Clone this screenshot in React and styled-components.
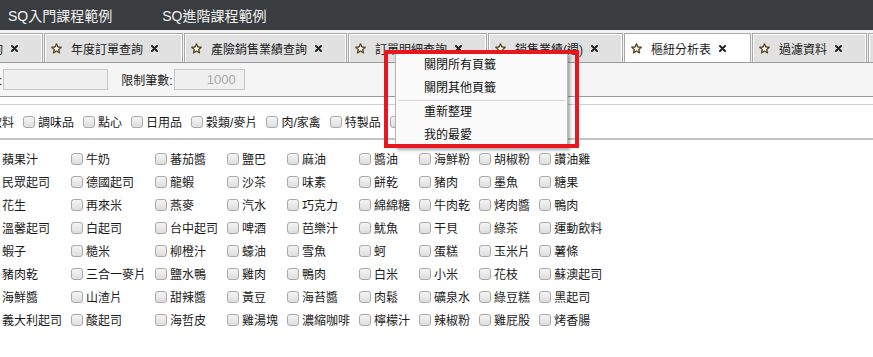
import React from 'react';
import styled, { createGlobalStyle } from 'styled-components';

const GlobalStyle = createGlobalStyle`
  body {
    margin: 0;
    background: #fff;
    overflow: hidden;
    font-family: "Liberation Sans", "Noto Sans CJK TC", sans-serif;
    font-size: 12px;
    color: #222;
  }
`;

const menus = ['SQ入門課程範例', 'SQ進階課程範例'];

const tabs = [
  { label: '銷售明細查詢' },
  { label: '年度訂單查詢' },
  { label: '產險銷售業績查詢' },
  { label: '訂單明細查詢' },
  { label: '銷售業績(週)' },
  { label: '樞紐分析表', active: true },
  { label: '過濾資料' },
  { label: '客戶資料' }
];

const categories = ['飲料', '調味品', '點心', '日用品', '穀類/麥片', '肉/家禽', '特製品', '海鮮'];

const products = [
  ['蘋果汁', '牛奶', '蕃茄醬', '鹽巴', '麻油', '醬油', '海鮮粉', '胡椒粉', '讚油雞'],
  ['民眾起司', '德國起司', '龍蝦', '沙茶', '味素', '餅乾', '豬肉', '墨魚', '糖果'],
  ['花生', '再來米', '燕麥', '汽水', '巧克力', '綿綿糖', '牛肉乾', '烤肉醬', '鴨肉'],
  ['溫馨起司', '白起司', '台中起司', '啤酒', '芭樂汁', '魷魚', '干貝', '綠茶', '運動飲料'],
  ['蝦子', '糙米', '柳橙汁', '蠔油', '雪魚', '蚵', '蛋糕', '玉米片', '薯條'],
  ['豬肉乾', '三合一麥片', '鹽水鴨', '雞肉', '鴨肉', '白米', '小米', '花枝', '蘇澳起司'],
  ['海鮮醬', '山渣片', '甜辣醬', '黃豆', '海苔醬', '肉鬆', '礦泉水', '綠豆糕', '黑起司'],
  ['義大利起司', '酸起司', '海哲皮', '雞湯塊', '濃縮咖啡', '檸檬汁', '辣椒粉', '雞屁股', '烤香腸']
];

const contextItems = [['關閉所有頁籤', '關閉其他頁籤'], ['重新整理', '我的最愛']];

const starPath =
  'M5.5 0.8 L6.9 4 L10.3 4.3 L7.7 6.5 L8.5 9.9 L5.5 8.1 L2.5 9.9 L3.3 6.5 L0.7 4.3 L4.1 4 Z';

function Star() {
  return (
    <svg width='11' height='11' viewBox='0 0 11 11'>
      <path d={starPath} fill='#fffbe8' stroke='#c99a2e' strokeWidth='1.6' strokeLinejoin='round' />
      <path d={starPath} fill='none' stroke='#1d2f5e' strokeWidth='0.9' strokeLinejoin='round' />
    </svg>
  );
}

function CloseIcon() {
  return (
    <svg width='7' height='7' viewBox='0 0 7 7'>
      <path d='M1 1 L6 6 M6 1 L1 6' stroke='#222' strokeWidth='2' strokeLinecap='round' />
    </svg>
  );
}

export default function App() {
  return (
    <Page>
      <GlobalStyle />
      <TopBar>
        {menus.map(m => (
          <MenuLink key={m}>{m}</MenuLink>
        ))}
      </TopBar>

      <TabStrip>
        <TabTrack>
          {tabs.map(t => (
            <Tab key={t.label} active={t.active}>
              <Star />
              <TabLabel>{t.label}</TabLabel>
              <CloseIcon />
            </Tab>
          ))}
        </TabTrack>
      </TabStrip>

      <Toolbar>
        <Field>
          <FieldLabel>訂單編號:</FieldLabel>
          <TextBox width={105} />
        </Field>
        <Field>
          <FieldLabel>限制筆數:</FieldLabel>
          <TextBox width={71} align='right'>
            1000
          </TextBox>
        </Field>
      </Toolbar>

      <CategoryRow>
        {categories.map(c => (
          <CheckItem key={c}>
            <Box />
            {c}
          </CheckItem>
        ))}
      </CategoryRow>

      <ProductGrid>
        {products.flat().map((p, i) => (
          <GridCell key={i}>
            <Box />
            {p}
          </GridCell>
        ))}
      </ProductGrid>

      <Highlight />
      <ContextMenu>
        {contextItems.map((group, gi) => (
          <React.Fragment key={gi}>
            {gi > 0 && <MenuSeparator />}
            {group.map(item => (
              <MenuItem key={item}>{item}</MenuItem>
            ))}
          </React.Fragment>
        ))}
      </ContextMenu>
    </Page>
  );
}

const Page = styled.div`
  position: relative;
  width: 873px;
  height: 357px;
  overflow: hidden;
`;

const TopBar = styled.header`
  height: 30px;
  background: #3a3d40;
  display: flex;
  align-items: center;
  gap: 50px;
  padding-left: 8px;
`;

const MenuLink = styled.a`
  color: #f2f2f2;
  font-size: 14px;
  cursor: pointer;
`;

const TabStrip = styled.div`
  height: 29px;
  padding-top: 3px;
  background: #f2f2f2;
  border-bottom: 1px solid #9a9a9a;
  overflow: hidden;
`;

const TabTrack = styled.div`
  display: flex;
  margin-left: -96px;
  width: max-content;
`;

const Tab = styled.div`
  box-sizing: border-box;
  height: 29px;
  display: flex;
  align-items: center;
  padding: 0 24px 0 6px;
  margin-right: 1px;
  border: 1px solid #a8a8a8;
  border-bottom: none;
  box-shadow: inset 1px 1px 0 #fff, inset -1px 0 0 #fff;
  background: ${p => (p.active ? '#fff' : '#e1e1e1')};
  color: #1a1a1a;
  white-space: nowrap;
`;

const TabLabel = styled.span`
  margin: 0 8px 0 9px;
  font-size: 12px;
`;

const Toolbar = styled.div`
  height: 33px;
  background: #f5f5f5;
  border-bottom: 1px solid #9a9a9a;
  display: flex;
  align-items: center;
  gap: 13px;
  margin-left: -49px;
`;

const Field = styled.label`
  display: flex;
  align-items: center;
  gap: 1px;
`;

const FieldLabel = styled.span`
  color: #1a1a1a;
`;

const TextBox = styled.div`
  box-sizing: border-box;
  width: ${p => p.width}px;
  height: 21px;
  line-height: 19px;
  background: #f0f0f0;
  border: 1px solid #c8c8c8;
  color: #a8a8a8;
  text-align: ${p => p.align || 'left'};
  padding: 0 8px;
  font-size: 13px;
`;

const CategoryRow = styled.div`
  margin-top: 7px;
  height: 33px;
  border-top: 1px solid #cfcfcf;
  border-bottom: 2px solid #c4c4c4;
  display: flex;
  align-items: center;
  margin-left: -25px;
  white-space: nowrap;
`;

const CheckItem = styled.label`
  display: flex;
  align-items: center;
  margin-right: 9px;
  color: #1a1a1a;
`;

const Box = styled.span`
  box-sizing: border-box;
  width: 12px;
  height: 12px;
  margin-right: 3px;
  border: 1px solid #a9a9a9;
  border-radius: 3px;
  background: linear-gradient(#f4f4f4, #dedede);
  flex: none;
`;

const ProductGrid = styled.div`
  display: grid;
  grid-template-columns: repeat(9, max-content);
  grid-auto-rows: 23px;
  padding-top: 7px;
  margin-left: -13px;
`;

const GridCell = styled.label`
  display: flex;
  align-items: center;
  padding-right: 9px;
  white-space: nowrap;
  color: #1a1a1a;
`;

const Highlight = styled.div`
  position: absolute;
  left: 384px;
  top: 50px;
  width: 195px;
  height: 98px;
  box-sizing: border-box;
  border: 4px solid #e8161f;
  z-index: 3;
  pointer-events: none;
`;

const ContextMenu = styled.ul`
  position: absolute;
  left: 395px;
  top: 53px;
  width: 173px;
  box-sizing: border-box;
  margin: 0;
  padding: 0;
  list-style: none;
  background: #fafafa;
  border: 1px solid #b8b8b8;
  box-shadow: 2px 2px 3px rgba(0, 0, 0, 0.35);
  z-index: 2;
`;

const MenuItem = styled.li`
  height: 23px;
  line-height: 23px;
  padding-left: 28px;
  color: #111;
`;

const MenuSeparator = styled.li`
  height: 1px;
  margin: 0 2px;
  background: #d8d8d8;
`;
